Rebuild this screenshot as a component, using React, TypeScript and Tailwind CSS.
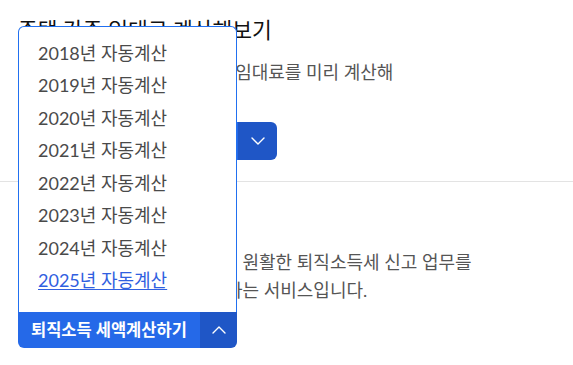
import { useState } from "react"

const YEARS = [2018, 2019, 2020, 2021, 2022, 2023, 2024, 2025]

function Chevron({ up }: { up?: boolean }) {
  return (
    <svg width="14" height="8" viewBox="0 0 14 8" fill="none" className="mx-auto">
      <polyline
        points={up ? "1,7 7,1 13,7" : "1,1 7,7 13,1"}
        stroke="white"
        strokeWidth="1.4"
        strokeLinecap="round"
        strokeLinejoin="round"
      />
    </svg>
  )
}

export default function App() {
  const [open] = useState(true)
  const current = 2025

  return (
    <div className="min-h-screen bg-white font-['Lato','Noto_Sans_CJK_KR',sans-serif]">
      <section className="px-[18px] pt-4 pb-[21px] border-b border-[#e3e3e3]">
        <h2 className="text-[21.5px] leading-7 text-[#111]">주택 간주 임대료 계산해보기</h2>
        <p className="mt-[14px] text-[18px] leading-7 text-[#555]">
          전세보증금에 대한 주택 간주 임대료를 미리 계산해
          <br />
          보는 서비스입니다.
        </p>
        <div className="mt-2 flex h-[38px] w-[259px] overflow-hidden rounded-md">
          <button className="flex-1 bg-[#2569e8] px-[13px] text-left text-[16.5px] font-bold text-white">
            간주임대료 계산하기
          </button>
          <button className="w-[39px] bg-[#1f56c6]">
            <Chevron />
          </button>
        </div>
      </section>

      <section className="px-[18px] pt-6">
        <h2 className="text-[21.5px] leading-7 text-[#111]">퇴직소득 계산해보기</h2>
        <p className="mt-[14px] text-[18px] leading-7 text-[#555]">
          퇴직소득세액을 미리계산하여 원활한 퇴직소득세 신고 업무를
          <br />
          세액을 확인하여 절세를지원하는 서비스입니다.
        </p>
        <div className="relative mt-2 w-[219px]">
          {open && (
            <ul className="absolute bottom-full left-0 w-[219px] rounded-t-md border border-b-0 border-[#2170f0] bg-white pt-[10px] pb-[15px]">
              {YEARS.map((y) => (
                <li key={y} className="flex h-[32.5px] items-center px-[19px]">
                  <a
                    href="#"
                    className={
                      y === current
                        ? "text-[18px] text-[#3060e0] underline underline-offset-2"
                        : "text-[18px] text-[#4a4a4a]"
                    }
                  >
                    {y}년 자동계산
                  </a>
                </li>
              ))}
            </ul>
          )}
          <div className="flex h-[36px] overflow-hidden rounded-b-md">
            <button className="flex-1 bg-[#2569e8] px-[13px] text-left text-[16.5px] font-bold text-white">
              퇴직소득 세액계산하기
            </button>
            <button className="w-[37px] bg-[#1f56c6]">
              <Chevron up />
            </button>
          </div>
        </div>
      </section>
    </div>
  )
}
